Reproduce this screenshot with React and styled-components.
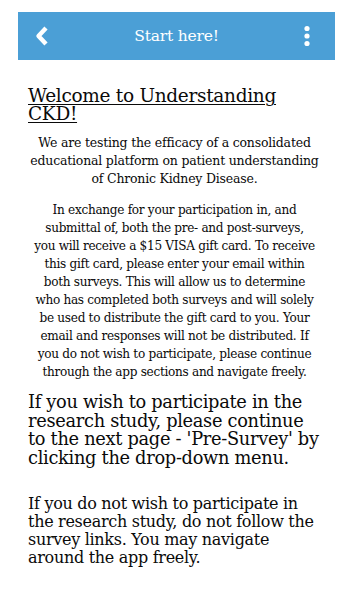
import styled, { createGlobalStyle } from "styled-components";

const GlobalStyle = createGlobalStyle`
  html, body {
    margin: 0;
    padding: 0;
    background: #fff;
  }
  body {
    font-family: "DejaVu Serif", Georgia, serif;
    color: #0a0a0a;
  }
`;

const Page = styled.div`
  padding: 12px 12px 0 18px;
  width: 347px;
  box-sizing: border-box;
`;

const TopBar = styled.header`
  height: 48px;
  background: #4b9fd6;
  display: grid;
  grid-template-columns: 48px 1fr 48px;
  align-items: center;
  color: #fff;
  width: 317px;
`;

const IconBtn = styled.button`
  background: none;
  border: 0;
  padding: 0 ${(p) => (p.$right ? "8px" : "0")} 0 0;
  height: 48px;
  display: flex;
  align-items: center;
  justify-content: center;
  color: #fff;
`;

const Title = styled.h1`
  margin: 0;
  text-align: center;
  font-family: "DejaVu Serif", Georgia, serif;
  font-weight: normal;
  font-size: 15.5px;
  letter-spacing: -0.2px;
`;

const Content = styled.main`
  padding: 27px 14px 0 10px;
  width: 317px;
  box-sizing: border-box;
`;

const Heading = styled.h2`
  margin: 0 0 11px;
  font-weight: normal;
  font-size: 18.5px;
  line-height: 18px;
  letter-spacing: -0.3px;
  text-decoration: underline;
  text-decoration-thickness: 1px;
  text-underline-offset: 2px;
`;

const Para = styled.p`
  margin: 0 0 ${(p) => p.$gap || 12}px;
  text-align: ${(p) => (p.$center ? "center" : "left")};
  font-size: ${(p) => p.$size || 12.5}px;
  line-height: ${(p) => p.$lh || 18}px;
  letter-spacing: ${(p) => p.$ls || "-0.2px"};
`;

const Notice = styled(Para)`
  margin-left: -8px;
  margin-right: -8px;
  white-space: nowrap;
`;

function BackIcon() {
  return (
    <svg width="18" height="22" viewBox="0 0 18 22">
      <path d="M13 3 L5.5 11 L13 19" fill="none" stroke="#fff" strokeWidth="4.4" strokeLinejoin="round" />
    </svg>
  );
}

function DotsIcon() {
  return (
    <svg width="8" height="22" viewBox="0 0 8 22">
      <circle cx="4" cy="3.5" r="2.6" fill="#fff" />
      <circle cx="4" cy="11" r="2.6" fill="#fff" />
      <circle cx="4" cy="18.5" r="2.6" fill="#fff" />
    </svg>
  );
}

const noticeLines = [
  "In exchange for your participation in, and",
  "submittal of, both the pre- and post-surveys,",
  "you will receive a $15 VISA gift card. To receive",
  "this gift card, please enter your email within",
  "both surveys. This will allow us to determine",
  "who has completed both surveys and will solely",
  "be used to distribute the gift card to you. Your",
  "email and responses will not be distributed. If",
  "you do not wish to participate, please continue",
  "through the app sections and navigate freely.",
];

export default function App() {
  return (
    <>
      <GlobalStyle />
      <Page>
        <TopBar>
          <IconBtn aria-label="Back">
            <BackIcon />
          </IconBtn>
          <Title>Start here!</Title>
          <IconBtn aria-label="Menu" $right>
            <DotsIcon />
          </IconBtn>
        </TopBar>
        <Content>
          <Heading>Welcome to Understanding CKD! </Heading>
          <Para $center $gap={13}>
            We are testing the efficacy of a consolidated educational platform
            on patient understanding of Chronic Kidney Disease.
          </Para>
          <Notice $center $size={12.1} $ls="-0.3px" $gap={12}>
            {noticeLines.map((line, i) => (
              <span key={i}>
                {line}
                {i < noticeLines.length - 1 && <br />}
              </span>
            ))}
          </Notice>
          <Para $size={17.8} $lh={18.7} $gap={27} $ls="-0.3px">
            If you wish to participate in the research study, please continue
            to the next page - 'Pre-Survey' by clicking the drop-down menu.
          </Para>
          <Para $size={16} $lh={18} $ls="-0.3px">
            If you do not wish to participate in the research study, do not
            follow the survey links. You may navigate around the app freely.
          </Para>
        </Content>
      </Page>
    </>
  );
}
